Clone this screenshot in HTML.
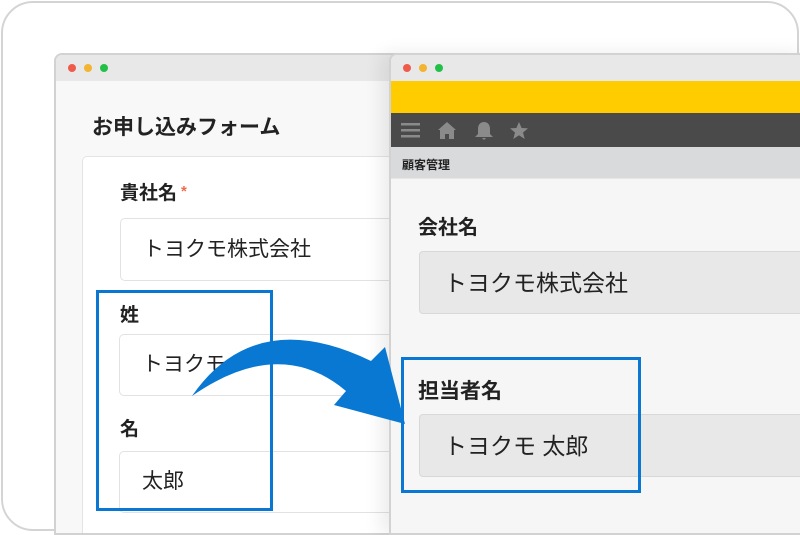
<!DOCTYPE html><html><head><meta charset="utf-8"><style>
*{margin:0;padding:0;box-sizing:border-box}
body{width:800px;height:533px;background:#fff;position:relative;overflow:hidden;font-family:"Liberation Sans","Noto Sans CJK JP",sans-serif;color:#222}
.abs{position:absolute}
.frame{left:1px;top:1px;width:798px;height:530px;border:2px solid #d4d4d4;border-radius:32px;background:#fff}
.win{background:#f8f8f8;border:2px solid #d2d2d2;border-radius:8px 8px 0 0;overflow:hidden}
.tb{position:absolute;left:0;top:0;right:0;height:26px;background:#e8e8e8}
.d{position:absolute;top:9px;width:8px;height:8px;border-radius:50%}
.lbl{font-weight:bold;font-size:19px;color:#222;line-height:1}
.inp{background:#fff;border:1px solid #e2e2e2;border-radius:5px;font-size:21px;color:#222;padding-left:22px;display:flex;align-items:center;padding-bottom:4px}
.ginp{background:#e8e8e8;border:1px solid #d8d8d8;border-radius:4px;font-size:23px;padding-left:24px;display:flex;align-items:center;padding-bottom:4px}
</style></head><body>
<div class="abs frame"></div>
<div class="abs win" style="left:54px;top:53px;width:360px;height:482px">
 <div class="tb"></div>
 <div class="d" style="left:12px;background:#ef5b4a"></div><div class="d" style="left:28px;background:#f2b431"></div><div class="d" style="left:44px;background:#23c047"></div>
 <div class="abs" style="left:36px;top:62px;font-size:21px;font-weight:bold;line-height:1">お申し込みフォーム</div>
 <div class="abs" style="left:26px;top:101px;width:340px;height:390px;background:#fff;border:1px solid #e4e4e4;border-radius:5px"></div>
 <div class="abs lbl" style="left:64px;top:129px">貴社名<span style="color:#f06a4c;font-size:15px;vertical-align:top;margin-left:4px">*</span></div>
 <div class="abs inp" style="left:64px;top:163px;width:300px;height:63px">トヨクモ株式会社</div>
 <div class="abs lbl" style="left:64px;top:251px">姓</div>
 <div class="abs inp" style="left:63px;top:279px;width:300px;height:62px">トヨクモ</div>
 <div class="abs lbl" style="left:64px;top:365px">名</div>
 <div class="abs inp" style="left:63px;top:396px;width:300px;height:62px">太郎</div>
</div>
<div class="abs win" style="left:389px;top:53px;width:420px;height:482px;box-shadow:-8px 0 18px rgba(0,0,0,.08);background:#f6f6f6">
 <div class="tb"></div>
 <div class="d" style="left:12px;background:#ef5b4a"></div><div class="d" style="left:28px;background:#f2b431"></div><div class="d" style="left:44px;background:#23c047"></div>
 <div class="abs" style="left:0;top:26px;right:0;height:32px;background:#ffcc00"></div>
 <div class="abs" style="left:0;top:58px;right:0;height:34px;background:#4a4a4a"></div>
 <svg class="abs" style="left:8px;top:64px" width="130" height="22" viewBox="0 0 130 22" fill="#8a8a8a">
  <rect x="2" y="4" width="19" height="2.5"/><rect x="2" y="10" width="19" height="2.5"/><rect x="2" y="16" width="19" height="2.5"/>
  <path d="M48 3 L39 11 L41 11 L41 20 L46 20 L46 15 L50 15 L50 20 L55 20 L55 11 L57 11 Z"/>
  <path d="M85 3 C81 3 79 6 79 10 L79 15 L76 18 L94 18 L91 15 L91 10 C91 6 89 3 85 3 Z M83 19 L87 19 L85 21 Z"/>
  <path d="M120 3 L122.6 9 L129 9.4 L124 13.5 L125.7 20 L120 16.3 L114.3 20 L116 13.5 L111 9.4 L117.4 9 Z"/>
 </svg>
 <div class="abs" style="left:0;top:92px;right:0;height:32px;background:#d9dadc;border-bottom:1px solid #e6e6e6"></div>
 <div class="abs" style="left:11px;top:101px;font-size:12px;font-weight:bold">顧客管理</div>
 <div class="abs lbl" style="left:27px;top:163px;font-size:20px">会社名</div>
 <div class="abs ginp" style="left:28px;top:196px;width:400px;height:63px">トヨクモ株式会社</div>
 <div class="abs lbl" style="left:27px;top:326px;font-size:21px">担当者名</div>
 <div class="abs ginp" style="left:28px;top:359px;width:400px;height:63px">トヨクモ 太郎</div>
</div>
<div class="abs" style="left:96px;top:290px;width:177px;height:221px;border:3px solid #0a78d2"></div>
<div class="abs" style="left:401px;top:357px;width:240px;height:136px;border:3px solid #0a78d2"></div>
<svg class="abs" style="left:0;top:0" width="800" height="533" viewBox="0 0 800 533">
 <path fill="#0878d2" d="M192 396 Q255 305 371 361 L385 347 L405 424 L334 405 L346 391 Q280 335 192 396 Z"/>
</svg>
</body></html>
